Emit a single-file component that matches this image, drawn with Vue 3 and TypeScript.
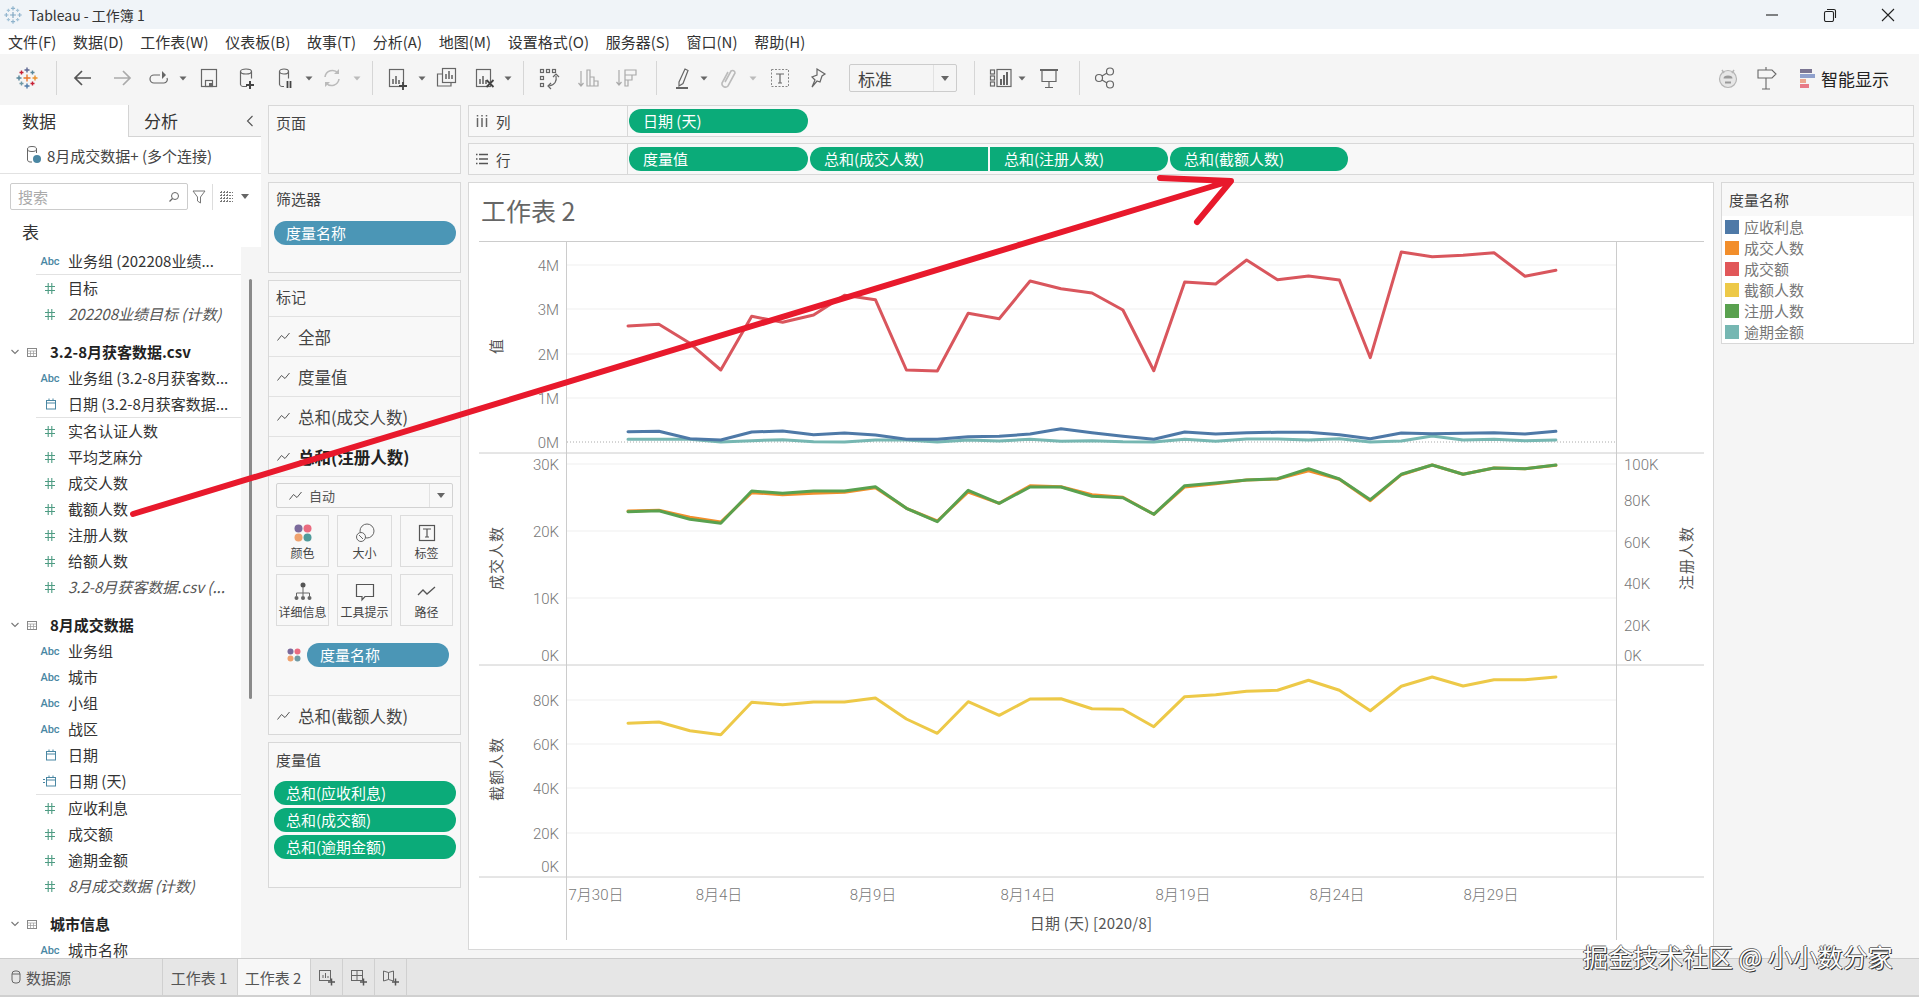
<script setup lang="ts">
type Tool = { c: number; s: number; icon: string; h?: number }

const B = 'fill="none" stroke="#666" stroke-width="1.2"'
const L = 'fill="none" stroke="#aaa" stroke-width="1.2"'
const bars = (x: number, y: number) =>
  `<path d="M${x} ${y + 9}v-5M${x + 3} ${y + 9}v-8M${x + 6} ${y + 9}v-4" fill="none" stroke="#555" stroke-width="1.4"/>`
const plus = (x: number, y: number, col: string) =>
  `<path d="M${x - 4} ${y}h8M${x} ${y - 4}v8" fill="none" stroke="${col}" stroke-width="1.8"/>`
const logo = [
  [12, 12, '#e8762d', 3.5], [12, 4, '#5b6591', 2.5], [12, 20, '#4e79a7', 2.5], [4, 12, '#59879b', 2.5], [20, 12, '#eb912b', 2.5],
  [6.5, 6.5, '#c72035', 2], [17.5, 6.5, '#59879b', 2], [6.5, 17.5, '#7099a6', 2], [17.5, 17.5, '#c72035', 2]
]
  .map(([x, y, c, r]) => `<path d="M${+x - +r} ${y}h${+r * 2}M${x} ${+y - +r}v${+r * 2}" fill="none" stroke="${c}" stroke-width="1.4"/>`)
  .join('')
const titleLogo = [
  [12, 12, '#7fa6c2', 3.5], [12, 4, '#8fb3cc', 2.5], [12, 20, '#8fb3cc', 2.5], [4, 12, '#8fb3cc', 2.5], [20, 12, '#8fb3cc', 2.5],
  [6.5, 6.5, '#a5c4d8', 2], [17.5, 6.5, '#a5c4d8', 2], [6.5, 17.5, '#a5c4d8', 2], [17.5, 17.5, '#a5c4d8', 2]
]
  .map(([x, y, c, r]) => `<path d="M${+x - +r} ${y}h${+r * 2}M${x} ${+y - +r}v${+r * 2}" fill="none" stroke="${c}" stroke-width="1.4"/>`)
  .join('')

const icons: Record<string, string> = {
  logo,
  titleLogo,
  back: '<path d="M20 12H5M11 5l-7 7 7 7" fill="none" stroke="#555" stroke-width="1.7"/>',
  forward: '<path d="M4 12h15M13 5l7 7-7 7" fill="none" stroke="#aaa" stroke-width="1.7"/>',
  redo: `<path d="M13 9H7a3.5 3.5 0 0 0 0 8h10a3.5 3.5 0 0 0 3-5" ${B}/><path d="M15 5l4 4-4 4z" fill="#666"/>`,
  caret: '<path d="M8.5 10.5h7L12 14.500z" fill="#666"/>',
  caretl: '<path d="M8.5 10.5h7L12 14.500z" fill="#bbb"/>',
  save: `<rect x="4.500" y="3.500" width="15" height="17" ${B}/><rect x="8.500" y="14.500" width="7" height="6" ${B}/><path d="M15 17h-3v3.500h3z" fill="#666"/>`,
  newds: `<path d="M5.500 5.500v13a2.500 2.500 0 0 0 2.500 2h4M16.500 5.500v7" ${B}/><ellipse cx="11" cy="5.500" rx="5.500" ry="2.500" ${B}/><path d="M11 19h8M15 15v8" fill="none" stroke="#444" stroke-width="2"/>`,
  pauseds: `<path d="M6.500 5.500v13a2.500 2.500 0 0 0 2.500 2h2M15.500 5.500v7" ${B}/><ellipse cx="11" cy="5.500" rx="4.500" ry="2.500" ${B}/><path d="M14.500 15v7M17.500 15v7" fill="none" stroke="#444" stroke-width="1.8"/>`,
  refresh: `<path d="M5 11a7.500 7.500 0 0 1 13-4M19 13a7.500 7.500 0 0 1-13 4" fill="none" stroke="#bbb" stroke-width="1.6"/><path d="M19 3v5h-5zM5 21v-5h5z" fill="#bbb"/>`,
  newsheet: `<rect x="4.500" y="3.500" width="14" height="17" ${B}/>${bars(8, 9)}${plus(18, 20, '#444')}`,
  dup: `<rect x="8.500" y="2.500" width="13" height="14" ${B}/><path d="M8 8H3.500v12H17v-3" ${B}/>${bars(12, 4)}`,
  clear: `<rect x="4.500" y="3.500" width="14" height="17" ${B}/>${bars(8, 9)}<path d="M14.500 17l7 7M21.500 17l-7 7" fill="none" stroke="#444" stroke-width="1.8" transform="translate(0 -3)"/>`,
  swap: `<rect x="3.500" y="3.500" width="3" height="3" ${B}/><rect x="9.500" y="3.500" width="3" height="3" ${B}/><rect x="15.500" y="3.500" width="3" height="3" ${B}/><rect x="3.500" y="10.500" width="3" height="3" ${B}/><rect x="3.500" y="17.500" width="3" height="3" ${B}/><path d="M19 10c1 5-1 9-7 10" ${B}/><path d="M16 11l3-3 3 3M14 17l-3 3 3 3" ${B}/>`,
  sortup: `<path d="M4 5v15M1.500 17L4 20l2.500-3M10 4h3v16h-3zM13 11h4v9h-4zM17 15h4v5h-4z" ${L}/>`,
  sortdn: `<path d="M4 4v15M1.500 16L4 19l2.500-3M10 4h11v5H10zM10 9h7v5h-7zM10 14h3v6h-3z" ${L}/>`,
  pen: '<path d="M8 16l6-13 3 1.500-5 13-4 2.500z" fill="none" stroke="#666" stroke-width="1.2"/><path d="M5 22h12" stroke="#555" stroke-width="1.800"/>',
  clip: '<path d="M9 16l6-11a2.500 2.500 0 0 1 4 2l-7 13a3.500 3.500 0 0 1-6-3l6-11" fill="none" stroke="#bbb" stroke-width="1.600" transform="translate(-1 0)"/>',
  tbox: `<rect x="3.500" y="3.500" width="17" height="17" fill="none" stroke="#888" stroke-dasharray="2 1.500"/><path d="M8 8h8M12 8v9M10 17h4" ${B}/>`,
  pin: `<path d="M12 3l8 5-3 2-2 6-3-1-5 6 3-7-3-3 5-2z" ${B}/>`,
  showme: `<rect x="1.500" y="4" width="4" height="4" ${B}/><rect x="1.500" y="10" width="4" height="4" ${B}/><rect x="1.500" y="16" width="4" height="4" ${B}/><rect x="8" y="3.500" width="14" height="17" ${B}/><path d="M12 19v-6M15 19v-10M18 19v-13" fill="none" stroke="#555" stroke-width="1.800"/>`,
  present: `<path d="M3 4h18" stroke="#555" stroke-width="1.800"/><path d="M5 4.500v11h14v-11M12 15.500v6M8 21.500h8" ${B}/>`,
  share: `<circle cx="6" cy="12" r="3.500" ${B}/><circle cx="17" cy="5.500" r="3.500" ${B}/><circle cx="17" cy="18.500" r="3.500" ${B}/><path d="M9 10l5-3M9 14l5 3" ${B}/>`
}

const tools: Tool[] = [
  { c: 27, s: 24, icon: 'logo' }, { c: 56, s: 1, icon: 'sep' }, { c: 83, s: 24, icon: 'back' }, { c: 122, s: 24, icon: 'forward' },
  { c: 159, s: 24, icon: 'redo' }, { c: 183, s: 12, icon: 'caret' }, { c: 209, s: 24, icon: 'save' }, { c: 247, s: 24, icon: 'newds' },
  { c: 285, s: 24, icon: 'pauseds' }, { c: 309, s: 12, icon: 'caret' }, { c: 332, s: 24, icon: 'refresh' }, { c: 357, s: 12, icon: 'caretl' },
  { c: 372, s: 1, icon: 'sep' }, { c: 397, s: 24, icon: 'newsheet' }, { c: 422, s: 12, icon: 'caret' }, { c: 446, s: 24, icon: 'dup' },
  { c: 484, s: 24, icon: 'clear' }, { c: 508, s: 12, icon: 'caret' }, { c: 523, s: 1, icon: 'sep' }, { c: 549, s: 24, icon: 'swap' },
  { c: 589, s: 24, icon: 'sortup' }, { c: 627, s: 24, icon: 'sortdn' }, { c: 656, s: 1, icon: 'sep' }, { c: 683, s: 24, icon: 'pen' },
  { c: 704, s: 12, icon: 'caret' }, { c: 729, s: 24, icon: 'clip' }, { c: 753, s: 12, icon: 'caretl' }, { c: 780, s: 24, icon: 'tbox' },
  { c: 817, s: 24, icon: 'pin' }, { c: 903, s: 108, icon: 'select' }, { c: 974, s: 1, icon: 'sep' }, { c: 1001, s: 24, icon: 'showme' },
  { c: 1022, s: 12, icon: 'caret' }, { c: 1049, s: 24, icon: 'present' }, { c: 1079, s: 1, icon: 'sep' }, { c: 1105, s: 24, icon: 'share' }
]
const toolGap = (i: number) => {
  const t = tools[i]
  const prev = i ? tools[i - 1].c + tools[i - 1].s / 2 : 0
  return t.c - t.s / 2 - prev + 'px'
}

const menus = ['文件(F)', '数据(D)', '工作表(W)', '仪表板(B)', '故事(T)', '分析(A)', '地图(M)', '设置格式(O)', '服务器(S)', '窗口(N)', '帮助(H)']

type Row = { t: string; k: string; sep?: boolean; it?: boolean }
const rows: Row[] = [
  { t: '业务组 (202208业绩...', k: 'abc', sep: true }, { t: '目标', k: 'num' }, { t: '202208业绩目标 (计数)', k: 'num', it: true },
  { t: '3.2-8月获客数据.csv', k: 'group' },
  { t: '业务组 (3.2-8月获客数...', k: 'abc' }, { t: '日期 (3.2-8月获客数据...', k: 'date', sep: true },
  { t: '实名认证人数', k: 'num' }, { t: '平均芝麻分', k: 'num' }, { t: '成交人数', k: 'num' }, { t: '截额人数', k: 'num' },
  { t: '注册人数', k: 'num' }, { t: '给额人数', k: 'num' }, { t: '3.2-8月获客数据.csv (...', k: 'num', it: true },
  { t: '8月成交数据', k: 'group' },
  { t: '业务组', k: 'abc' }, { t: '城市', k: 'abc' }, { t: '小组', k: 'abc' }, { t: '战区', k: 'abc' }, { t: '日期', k: 'date' },
  { t: '日期 (天)', k: 'datex', sep: true },
  { t: '应收利息', k: 'num' }, { t: '成交额', k: 'num' }, { t: '逾期金额', k: 'num' }, { t: '8月成交数据 (计数)', k: 'num', it: true },
  { t: '城市信息', k: 'group' }, { t: '城市名称', k: 'abc' }
]

const markRows = ['全部', '度量值', '总和(成交人数)']
const legend = [
  { t: '应收利息', c: '#4e79a7' }, { t: '成交人数', c: '#f28e2b' }, { t: '成交额', c: '#e15759' },
  { t: '截额人数', c: '#edc948' }, { t: '注册人数', c: '#59a14f' }, { t: '逾期金额', c: '#76b7b2' }
]

const px = (i: number) => 628 + i * 30.93
const line = (vals: number[], base: number) => vals.map((v, i) => `${px(i).toFixed(1)},${(base + v / 3).toFixed(1)}`).join(' ')
const series = [
  { c: '#76b7b2', base: 230, v: [628, 628, 628, 636, 632, 629, 635, 636, 630, 630, 636, 630, 633, 628, 634, 632, 635, 636, 628, 634, 627, 627, 630, 626, 636, 633, 618, 630, 628, 632, 630] },
  { c: '#4e79a7', base: 230, v: [605, 604, 626, 630, 606, 603, 614, 609, 615, 628, 628, 620, 619, 612, 596, 608, 619, 628, 606, 612, 608, 607, 607, 614, 626, 609, 611, 610, 608, 612, 604] },
  { c: '#d9565d', base: 230, v: [288, 283, 340, 420, 259, 277, 255, 196, 209, 420, 423, 250, 266, 153, 176, 189, 240, 422, 156, 162, 90, 149, 138, 150, 383, 66, 80, 76, 68, 139, 121] },
  { c: '#f28e2b', base: 230, v: [843, 841, 862, 876, 788, 794, 790, 787, 773, 835, 873, 786, 820, 767, 770, 794, 802, 853, 771, 761, 750, 747, 722, 748, 812, 734, 705, 733, 714, 716, 706] },
  { c: '#59a14f', base: 230, v: [845, 842, 868, 880, 783, 790, 783, 783, 770, 835, 875, 781, 820, 771, 771, 799, 803, 853, 767, 759, 750, 746, 716, 747, 809, 733, 705, 733, 714, 716, 705] },
  { c: '#edc948', base: 610, v: [340, 336, 362, 374, 277, 284, 276, 276, 264, 327, 370, 275, 316, 267, 266, 296, 298, 350, 260, 254, 244, 241, 211, 241, 302, 229, 201, 228, 209, 209, 201] }
]
const grid = [265, 309, 354, 398, 464, 531, 598, 700, 744, 788, 833]
const leftTicks = [
  { t: '4M', y: 265 }, { t: '3M', y: 309 }, { t: '2M', y: 354 }, { t: '1M', y: 398 }, { t: '0M', y: 442 },
  { t: '30K', y: 464 }, { t: '20K', y: 531 }, { t: '10K', y: 598 }, { t: '0K', y: 655 },
  { t: '80K', y: 700 }, { t: '60K', y: 744 }, { t: '40K', y: 788 }, { t: '20K', y: 833 }, { t: '0K', y: 866 }
]
const rightTicks = [
  { t: '100K', y: 464 }, { t: '80K', y: 500 }, { t: '60K', y: 542 }, { t: '40K', y: 583 }, { t: '20K', y: 625 }, { t: '0K', y: 655 }
]
const xTicks = [
  { t: '7月30日', x: 596 }, { t: '8月4日', x: 719 }, { t: '8月9日', x: 873 }, { t: '8月14日', x: 1028 },
  { t: '8月19日', x: 1183 }, { t: '8月24日', x: 1337 }, { t: '8月29日', x: 1491 }
]
const axisTitles = [
  { t: '值', x: 497, y: 346 }, { t: '成交人数', x: 497, y: 558 }, { t: '截额人数', x: 497, y: 769 }, { t: '注册人数', x: 1687, y: 558 }
]
</script>

<template>
  <div class="app">
    <header class="titlebar">
      <svg class="tlogo" width="20" height="20" viewBox="0 0 24 24" v-html="icons.titleLogo"></svg>
      <span class="ttext">Tableau - 工作簿 1</span>
      <div class="winbtns">
        <svg width="14" height="14" viewBox="0 0 14 14"><path d="M1 7h12" stroke="#222" stroke-width="1.1" /></svg>
        <svg width="14" height="14" viewBox="0 0 14 14"><rect x="1.500" y="3.500" width="9" height="10" rx="1.500" fill="none" stroke="#222" stroke-width="1.1" /><path d="M4 1.500h7a1.500 1.500 0 0 1 1.500 1.500v7" fill="none" stroke="#222" stroke-width="1.1" /></svg>
        <svg width="14" height="14" viewBox="0 0 14 14"><path d="M1 1l12 12M13 1L1 13" stroke="#222" stroke-width="1.1" /></svg>
      </div>
    </header>

    <nav class="menubar">
      <span v-for="m in menus" :key="m">{{ m }}</span>
    </nav>

    <div class="toolbar">
      <template v-for="(t, i) in tools" :key="i">
        <div v-if="t.icon === 'sep'" class="tsep" :style="{ marginLeft: toolGap(i) }"></div>
        <div v-else-if="t.icon === 'select'" class="tselect" :style="{ marginLeft: toolGap(i) }">
          <span class="tselect-text">标准</span>
          <span class="tselect-caret"><i class="tri"></i></span>
        </div>
        <svg v-else :width="t.s" height="24" :viewBox="t.s === 12 ? '6 0 12 24' : '0 0 24 24'" class="ticon" :style="{ marginLeft: toolGap(i) }" v-html="icons[t.icon]"></svg>
      </template>
      <div class="tright">
        <svg width="24" height="26" viewBox="0 0 24 26">
          <circle cx="12" cy="14" r="8.500" fill="#e6e6e6" stroke="#b5b5b5" stroke-width="1.200" />
          <path d="M6 5l2 3M18 5l-2 3" stroke="#b5b5b5" stroke-width="1.500" />
          <path d="M7.500 13.500a4.500 3 0 0 1 9 0zM9 16.500h6v2H9z" fill="#999" />
        </svg>
        <svg class="sign" width="24" height="26" viewBox="0 0 24 26">
          <path d="M4 5h14l4 4-4 4H4z" fill="none" stroke="#666" stroke-width="1.100" />
          <path d="M12 13v11M8 24h8M12 2v3" stroke="#666" stroke-width="1.100" />
        </svg>
        <div class="smbars"><i class="b1"></i><i class="b2"></i><i class="b3"></i><i class="b4"></i></div>
        <span class="smtext">智能显示</span>
      </div>
    </div>

    <div class="body">
      <aside class="sidebar">
        <div class="tabs">
          <div class="tab on">数据</div>
          <div class="tab off">分析
            <svg class="collapse" width="8" height="12" viewBox="0 0 8 12"><path d="M6.500 1L1.500 6l5 5" fill="none" stroke="#555" stroke-width="1.100" /></svg>
          </div>
        </div>
        <div class="dsrow">
          <svg width="16" height="20" viewBox="0 0 16 20">
            <path d="M1.500 4v11a2.500 2.500 0 0 0 2.500 2h2M10.500 4v4" fill="none" stroke="#666" />
            <ellipse cx="6" cy="4" rx="4.500" ry="2.500" fill="none" stroke="#666" />
            <circle cx="11" cy="14" r="4" fill="#4a87a3" />
          </svg>
          <span>8月成交数据+ (多个连接)</span>
        </div>
        <div class="searchrow">
          <div class="search">
            <span>搜索</span>
            <svg width="12" height="12" viewBox="0 0 12 12"><circle cx="7" cy="5" r="3.500" fill="none" stroke="#666" /><path d="M4.500 7.500L1.500 10.500" stroke="#666" stroke-width="1.200" /></svg>
          </div>
          <svg class="funnel" width="14" height="16" viewBox="0 0 14 16"><path d="M1 2h12L8.500 8v6l-3-2V8z" fill="none" stroke="#777" /></svg>
          <i class="vline"></i>
          <svg width="13" height="12" viewBox="0 0 13 12"><path d="M0 1.500h13M0 4.500h13M0 7.500h13M0 10.500h13M1.500 0v12M4.500 0v12M7.500 0v12" stroke="#777" stroke-dasharray="2 1" /></svg>
          <i class="tri dark"></i>
        </div>
        <div class="tbl-head">表</div>
        <div class="listwrap">
          <div class="list">
            <div v-for="(r, i) in rows" :key="i" class="row" :class="{ group: r.k === 'group', sep: r.sep, it: r.it }">
              <template v-if="r.k === 'group'">
                <svg class="chev" width="8" height="6" viewBox="0 0 8 6"><path d="M.5 1L4 4.500 7.500 1" fill="none" stroke="#777" stroke-width="1.100" /></svg>
                <svg class="gt" width="10" height="9" viewBox="0 0 10 9"><rect x=".5" y=".5" width="9" height="8" fill="none" stroke="#888" /><path d="M.5 3h9M.5 5.500h9M3.500 3v5.500M6.500 3v5.500" stroke="#999" stroke-width=".7" /></svg>
              </template>
              <span v-else class="ic">
                <span v-if="r.k === 'abc'" class="abc">Abc</span>
                <svg v-else-if="r.k === 'num'" width="10" height="11" viewBox="0 0 10 11"><path d="M0 3.500h10M0 7.500h10M3.200 0v11M6.800 0v11" stroke="#4e9c83" stroke-width="1.100" /></svg>
                <svg v-else width="14" height="12" viewBox="0 0 14 12">
                  <path v-if="r.k === 'datex'" d="M0 4.500h2M0 7.500h2" stroke="#4a87a3" />
                  <rect x="3.500" y="2.500" width="9" height="8.500" fill="none" stroke="#4a87a3" />
                  <path d="M3.500 5h9M6 .5v2M10 .5v2" stroke="#4a87a3" />
                </svg>
              </span>
              <span class="name">{{ r.t }}</span>
            </div>
          </div>
          <div class="gutter"><i class="thumb"></i></div>
        </div>
      </aside>

      <div class="panes">
        <section class="card pages"><div class="cardtitle">页面</div></section>
        <section class="card filters">
          <div class="cardtitle">筛选器</div>
          <div class="pill blue wide">度量名称</div>
        </section>
        <section class="card marks">
          <div class="markshead">标记</div>
          <div v-for="m in markRows" :key="m" class="markrow">
            <svg width="13" height="10" viewBox="0 0 13 10"><path d="M.5 8.500l4-5 3.500 3 4.500-5.500" fill="none" stroke="#555" /></svg>
            <span>{{ m }}</span>
          </div>
          <div class="markrow strong">
            <svg width="13" height="10" viewBox="0 0 13 10"><path d="M.5 8.500l4-5 3.500 3 4.500-5.500" fill="none" stroke="#555" /></svg>
            <span>总和(注册人数)</span>
          </div>
          <div class="markdetail">
            <div class="markselect">
              <svg width="13" height="10" viewBox="0 0 13 10"><path d="M.5 8.500l4-5 3.500 3 4.500-5.500" fill="none" stroke="#555" /></svg>
              <span>自动</span>
              <i class="selsplit"><i class="tri"></i></i>
            </div>
            <div class="markbtns">
              <div class="mbtn">
                <svg width="20" height="20" viewBox="0 0 20 20"><circle cx="5.500" cy="5.500" r="4" fill="#7b6a9b" /><circle cx="14.500" cy="5.500" r="4" fill="#ea6b80" /><circle cx="5.500" cy="14.500" r="4" fill="#efa26e" /><circle cx="14.500" cy="14.500" r="4" fill="#4f9b9b" /></svg>
                <span>颜色</span>
              </div>
              <div class="mbtn">
                <svg width="20" height="20" viewBox="0 0 20 20"><circle cx="12" cy="8" r="7" fill="none" stroke="#666" /><circle cx="6" cy="14" r="4.500" fill="#f8f8f8" stroke="#666" /><path d="M4 12l4 4" stroke="#666" /></svg>
                <span>大小</span>
              </div>
              <div class="mbtn">
                <svg width="20" height="20" viewBox="0 0 20 20"><rect x="2.500" y="2.500" width="15" height="15" fill="none" stroke="#555" stroke-width="1.200" /><path d="M6 6h8M10 6v8M8 14h4" fill="none" stroke="#555" stroke-width="1.200" /></svg>
                <span>标签</span>
              </div>
              <div class="mbtn">
                <svg width="20" height="20" viewBox="0 0 20 20"><circle cx="10" cy="3" r="2.500" fill="#555" /><path d="M10 5v6M3.500 14v-3h13v3M10 11v3" fill="none" stroke="#666" /><circle cx="3.500" cy="16" r="2" fill="#666" /><circle cx="10" cy="16" r="2" fill="#666" /><circle cx="16.500" cy="16" r="2" fill="#666" /></svg>
                <span>详细信息</span>
              </div>
              <div class="mbtn">
                <svg width="20" height="20" viewBox="0 0 20 20"><path d="M1.500 2.500h17v12H10l-3 3.500v-3.500H1.500z" fill="none" stroke="#555" stroke-width="1.200" /></svg>
                <span>工具提示</span>
              </div>
              <div class="mbtn">
                <svg width="20" height="20" viewBox="0 0 20 20"><path d="M1 13l5-5 4 4 8-7" fill="none" stroke="#555" stroke-width="1.300" /></svg>
                <span>路径</span>
              </div>
            </div>
            <div class="colorrow">
              <svg width="14" height="14" viewBox="0 0 14 14"><circle cx="3.500" cy="3.500" r="3" fill="#7b6a9b" /><circle cx="10.500" cy="3.500" r="3" fill="#ea6b80" /><circle cx="3.500" cy="10.500" r="3" fill="#efa26e" /><circle cx="10.500" cy="10.500" r="3" fill="#6f9ba5" /></svg>
              <div class="pill blue cpill">度量名称</div>
            </div>
          </div>
          <div class="markrow">
            <svg width="13" height="10" viewBox="0 0 13 10"><path d="M.5 8.500l4-5 3.500 3 4.500-5.500" fill="none" stroke="#555" /></svg>
            <span>总和(截额人数)</span>
          </div>
        </section>
        <section class="card measures">
          <div class="cardtitle">度量值</div>
          <div class="mpills">
            <div class="pill green wide">总和(应收利息)</div>
            <div class="pill green wide">总和(成交额)</div>
            <div class="pill green wide">总和(逾期金额)</div>
          </div>
        </section>
      </div>

      <main class="main">
        <div class="shelf">
          <div class="shelflabel">
            <svg width="12" height="14" viewBox="0 0 12 14"><path d="M1.500 4v9M6 4v9M10.500 4v9M1.500 1v1.500M6 1v1.500M10.500 1v1.500" stroke="#666" stroke-width="1.500" /></svg>
            <span>列</span>
          </div>
          <div class="shelfpills"><div class="pill green sp">日期 (天)</div></div>
        </div>
        <div class="shelf second">
          <div class="shelflabel">
            <svg width="12" height="14" viewBox="0 0 12 14"><path d="M0 2.500h1.500M3 2.500h9M0 7h1.500M3 7h9M0 11.500h1.500M3 11.500h9" stroke="#555" stroke-width="1.300" /></svg>
            <span>行</span>
          </div>
          <div class="shelfpills">
            <div class="pill green sp">度量值</div>
            <div class="pill green sp rsq gap">总和(成交人数)</div>
            <div class="pill green sp lsq gap">总和(注册人数)</div>
            <div class="pill green sp gap">总和(截额人数)</div>
          </div>
        </div>
        <div class="viz">
          <section class="chart">
            <div class="charttitle">工作表 2</div>
            <svg class="plot" width="1246" height="709" viewBox="468 241 1246 709">
              <line v-for="y in grid" :key="y" x1="567" x2="1616" :y1="y" :y2="y" class="gridline" />
              <line x1="567" x2="1616" y1="442" y2="442" class="zero" />
              <line x1="479" x2="1704" y1="241.500" y2="241.500" class="axis" />
              <line x1="479" x2="1704" y1="453" y2="453" class="axis" />
              <line x1="479" x2="1704" y1="665" y2="665" class="axis" />
              <line x1="479" x2="1704" y1="877" y2="877" class="axis" />
              <line x1="566.500" x2="566.500" y1="241" y2="940" class="axis" />
              <line x1="1616.500" x2="1616.500" y1="241" y2="940" class="axis" />
              <polyline v-for="s in series" :key="s.c" :points="line(s.v, s.base)" :stroke="s.c" class="series" />
              <text v-for="t in leftTicks" :key="t.t + t.y" x="559" :y="t.y + 6" class="tick end">{{ t.t }}</text>
              <text v-for="t in rightTicks" :key="t.t" x="1624" :y="t.y + 6" class="tick">{{ t.t }}</text>
              <text v-for="t in xTicks" :key="t.t" :x="t.x" y="900" class="tick mid">{{ t.t }}</text>
              <text x="1091" y="929" class="atitle mid wider">日期 (天) [2020/8]</text>
              <text v-for="a in axisTitles" :key="a.t" class="atitle mid spaced" :transform="`translate(${a.x + 5} ${a.y}) rotate(-90)`">{{ a.t }}</text>
            </svg>
          </section>
          <section class="legend">
            <div class="lhead">度量名称</div>
            <div class="litems">
              <div v-for="l in legend" :key="l.t" class="litem">
                <i class="swatch" :style="{ background: l.c }"></i>
                <span>{{ l.t }}</span>
              </div>
            </div>
          </section>
        </div>
      </main>
    </div>

    <footer class="tabbar">
      <div class="bt ds">
        <svg width="10" height="14" viewBox="0 0 10 14"><rect x="1" y="1" width="8" height="12" rx="3" fill="none" stroke="#666" /><path d="M1 4h8" stroke="#666" /></svg>
        <span>数据源</span>
      </div>
      <div class="bt sheet">工作表 1</div>
      <div class="bt sheet active">工作表 2</div>
      <div class="bt add">
        <svg width="18" height="18" viewBox="0 0 18 18"><rect x="1.500" y="2.500" width="11" height="10" fill="none" stroke="#666" /><path d="M5 10V7M7.500 10V5M10 10V8" stroke="#666" /><path d="M10 14h7M13.500 10.500v7" stroke="#555" stroke-width="1.500" /></svg>
      </div>
      <div class="bt add">
        <svg width="18" height="18" viewBox="0 0 18 18"><rect x="1.500" y="2.500" width="11" height="10" fill="none" stroke="#666" /><path d="M7 2.500v10M1.500 7.500h11" stroke="#666" /><path d="M10 14h7M13.500 10.500v7" stroke="#555" stroke-width="1.500" /></svg>
      </div>
      <div class="bt add">
        <svg width="18" height="18" viewBox="0 0 18 18"><path d="M1.500 3l5 1.500L11.500 3v10l-5-1.500L1.500 13z" fill="none" stroke="#666" /><path d="M6.500 4.500v7" stroke="#666" /><path d="M10 14h7M13.500 10.500v7" stroke="#555" stroke-width="1.500" /></svg>
      </div>
    </footer>

    <svg class="arrow" width="1919" height="997" viewBox="0 0 1919 997">
      <path d="M133 514L1230 181M1160 178L1231 181L1197 222" fill="none" stroke="#e8192c" stroke-width="6" stroke-linecap="round" stroke-linejoin="round" />
    </svg>
    <div class="watermark">掘金技术社区 @ 小小数分家</div>
  </div>
</template>

<style scoped>
.app {
  position: relative;
  width: 1919px;
  height: 997px;
  overflow: hidden;
  display: flex;
  flex-direction: column;
  background: #fff;
  color: #333;
  font-family: "Noto Sans CJK SC", "Noto Sans", sans-serif;
  font-size: 15px;
}
i { display: block; font-style: normal; }

.titlebar {
  height: 29px;
  flex: none;
  display: flex;
  align-items: center;
  background: #f0f4f8;
  padding-left: 3px;
}
.ttext { margin-left: 6px; font-size: 14px; color: #333; }
.winbtns { margin-left: auto; display: flex; gap: 44px; padding-right: 24px; }
.menubar {
  height: 25px;
  flex: none;
  display: flex;
  align-items: center;
  gap: 16.700px;
  padding-left: 8px;
  background: #fff;
  color: #333;
  font-size: 15px;
}
.toolbar {
  height: 51px;
  flex: none;
  box-sizing: border-box;
  display: flex;
  align-items: center;
  padding-bottom: 3px;
  background: #f5f5f5;
}
.ticon { flex: none; }
.tsep { width: 1px; height: 34px; background: #d6d6d6; flex: none; }
.tselect {
  width: 108px;
  height: 28px;
  flex: none;
  box-sizing: border-box;
  display: flex;
  align-items: center;
  border: 1px solid #ccc;
  border-radius: 2px;
  background: #f5f5f5;
}
.tselect-text { flex: 1; padding-left: 8px; font-size: 17px; color: #444; }
.tselect-caret {
  width: 22px;
  height: 100%;
  display: flex;
  align-items: center;
  justify-content: center;
  border-left: 1px solid #e2e2e2;
}
.tri { width: 0; height: 0; border: 4px solid transparent; border-top: 5px solid #666; border-bottom: 0; }
.tri.dark { margin-left: 8px; }
.tright { margin-left: auto; padding-right: 30px; display: flex; align-items: center; }
.sign { margin-left: 14px; }
.smbars { margin-left: 22px; width: 16px; display: flex; flex-direction: column; gap: 1px; }
.smbars i { height: 4px; }
.b1 { width: 12px; background: #7a7592; }
.b2 { width: 15px; background: #8fa0cc; }
.b3 { width: 6px; background: #eca78f; }
.b4 { width: 9px; background: #e87a87; }
.smtext { margin-left: 5px; font-size: 17px; color: #222; }

.body { height: 853px; flex: none; display: flex; background: #f5f5f5; }

.sidebar {
  width: 261px;
  flex: none;
  background: #fff;
  display: flex;
  flex-direction: column;
}
.tabs { height: 32px; flex: none; display: flex; }
.tab { box-sizing: border-box; font-size: 17px; line-height: 32px; color: #333; }
.tab.on { width: 128px; padding-left: 22px; }
.tab.off {
  flex: 1;
  padding-left: 15px;
  background: #f5f5f5;
  border-left: 1px solid #d4d4d4;
  border-bottom: 1px solid #d4d4d4;
  position: relative;
  display: flex;
  justify-content: space-between;
  align-items: center;
  padding-right: 7px;
}
.dsrow {
  height: 37px;
  flex: none;
  box-sizing: border-box;
  display: flex;
  align-items: center;
  gap: 5px;
  padding-left: 26px;
  border-bottom: 1px solid #e2e2e2;
  color: #444;
}
.searchrow { height: 45px; flex: none; box-sizing: border-box; display: flex; align-items: center; padding: 0 0 0 10px; }
.search {
  width: 178px;
  height: 27px;
  box-sizing: border-box;
  display: flex;
  align-items: center;
  justify-content: space-between;
  padding: 0 7px;
  border: 1px solid #ccc;
  border-radius: 2px;
  color: #aaa;
}
.funnel { margin-left: 4px; }
.vline { width: 1px; height: 26px; background: #ddd; margin: 0 7px 0 6px; }
.tbl-head { height: 28px; flex: none; padding-left: 22px; font-size: 17px; line-height: 26px; color: #333; }
.listwrap { flex: 1; min-height: 0; display: flex; }
.list { width: 241px; flex: none; padding-top: 1px; height: 711px; }
.row {
  height: 26px;
  display: flex;
  align-items: center;
  position: relative;
  white-space: nowrap;
  color: #333;
  line-height: 16px;
}
.row.sep { height: 27px; padding-bottom: 1px; box-sizing: border-box; }
.row.sep::after {
  content: "";
  position: absolute;
  left: 36px;
  right: 0;
  bottom: 0;
  height: 1px;
  background: #e2e2e2;
}
.row.it { font-style: italic; color: #555; }
.row.group { margin-top: 12px; font-weight: 700; color: #222; padding-left: 11px; }
.row.group .name { margin-left: 13px; }
.gt { margin-left: 8px; }
.ic {
  width: 20px;
  margin-left: 40px;
  margin-right: 8px;
  display: flex;
  justify-content: center;
  flex: none;
  font-style: normal;
}
.abc { font: 500 11px Roboto, sans-serif; color: #4a87a3; }
.gutter { flex: 1; background: #f5f5f5; position: relative; padding-left: 8px; }
.thumb { width: 3px; height: 420px; margin-top: 32px; background: #8a8a8a; border-radius: 2px; }

.panes {
  width: 193px;
  flex: none;
  margin-left: 7px;
  display: flex;
  flex-direction: column;
  gap: 7px;
}
.card { box-sizing: border-box; background: #f8f8f8; border: 1px solid #d8d8d8; }
.cardtitle { padding: 7px 0 0 7px; line-height: 22px; color: #444; }
.pages { height: 69px; }
.pages .cardtitle { padding-top: 6px; }
.filters { height: 91px; margin-top: 1px; }
.filters .cardtitle { padding-top: 5px; }
.pill {
  height: 24px;
  box-sizing: border-box;
  border-radius: 12px;
  color: #fff;
  line-height: 23px;
  padding-left: 12px;
  white-space: nowrap;
}
.pill.blue { background: #4b96b6; }
.pill.green { background: #0bab79; }
.pill.wide { width: 182px; margin-left: 5px; }
.filters .pill { margin-top: 11px; }
.marks { height: 455px; }
.markshead { height: 35px; padding-left: 7px; line-height: 32px; color: #444; }
.markrow {
  height: 40px;
  box-sizing: border-box;
  display: flex;
  align-items: center;
  gap: 8px;
  padding-left: 8px;
  border-top: 1px solid #e2e2e2;
  font-size: 16.500px;
  color: #444;
}
.markrow.strong { font-weight: 700; color: #222; }
.markdetail { height: 219px; box-sizing: border-box; border-top: 1px solid #e2e2e2; padding: 6px 7px 0; }
.markselect {
  height: 25px;
  box-sizing: border-box;
  display: flex;
  align-items: center;
  gap: 7px;
  padding-left: 12px;
  border: 1px solid #d2d2d2;
  border-radius: 2px;
  font-size: 13px;
  color: #555;
}
.selsplit {
  margin-left: auto;
  width: 22px;
  height: 100%;
  display: flex;
  align-items: center;
  justify-content: center;
  border-left: 1px solid #e2e2e2;
}
.markbtns {
  margin-top: 7px;
  display: grid;
  grid-template-columns: 53px 55px 53px;
  grid-auto-rows: 52px;
  gap: 7px 8px;
}
.mbtn {
  box-sizing: border-box;
  border: 1px solid #dcdcdc;
  display: flex;
  flex-direction: column;
  align-items: center;
  padding-top: 7px;
  font-size: 12px;
  line-height: 20px;
  color: #444;
  white-space: nowrap;
}
.colorrow { margin-top: 17px; display: flex; align-items: center; padding-left: 11px; gap: 6px; }
.cpill { width: 142px; padding-left: 13px; }
.measures { height: 146px; }
.measures .cardtitle { padding-top: 6px; }
.mpills { margin-top: 10px; display: flex; flex-direction: column; gap: 3px; }

.main { width: 1446px; flex: none; margin-left: 7px; display: flex; flex-direction: column; }
.shelf {
  height: 32px;
  flex: none;
  box-sizing: border-box;
  display: flex;
  background: #f8f8f8;
  border: 1px solid #d8d8d8;
}
.shelf.second { margin-top: 6px; }
.shelflabel {
  width: 159px;
  flex: none;
  box-sizing: border-box;
  display: flex;
  align-items: center;
  gap: 8px;
  padding-left: 7px;
  border-right: 1px solid #d8d8d8;
  font-size: 14.500px;
  color: #444;
}
.shelfpills { display: flex; align-items: center; padding-left: 1px; }
.sp { width: 179px; padding-left: 14px; }
.sp.gap { margin-left: 2px; width: 178px; }
.rsq { border-radius: 12px 0 0 12px; }
.lsq { border-radius: 0 12px 12px 0; }

.viz { margin-top: 7px; display: flex; gap: 7px; height: 768px; }
.chart { width: 1246px; box-sizing: border-box; height: 768px; background: #fff; border: 1px solid #d8d8d8; position: relative; overflow: hidden; }
.charttitle { height: 58px; box-sizing: border-box; padding: 9px 0 0 12px; font-size: 25px; line-height: 36px; color: #666; }
.plot { display: block; margin-left: -1px; }
.gridline { stroke: #efefef; stroke-width: 1; }
.zero { stroke: #aaa; stroke-width: 1; stroke-dasharray: 1 2; }
.axis { stroke: #ccc; stroke-width: 1; }
.series { fill: none; stroke-width: 3; stroke-linejoin: round; stroke-linecap: round; }
.tick { font: 300 15px Roboto, "Noto Sans CJK SC", sans-serif; fill: #777; }
.end { text-anchor: end; }
.mid { text-anchor: middle; }
.atitle { font: 15px "Noto Sans CJK SC", sans-serif; fill: #555; }
.wider { letter-spacing: .2px; }
.spaced { letter-spacing: 1px; }
.legend { width: 193px; height: 162px; box-sizing: border-box; background: #fff; border: 1px solid #d8d8d8; }
.lhead { height: 33px; padding-left: 7px; line-height: 33px; background: #f8f8f8; color: #444; }
.litems { padding: 0 0 0 3px; }
.litem { height: 21px; display: flex; align-items: center; gap: 5px; color: #777; line-height: 16px; }
.swatch { width: 14px; height: 14px; flex: none; }

.tabbar {
  height: 39px;
  flex: none;
  box-sizing: border-box;
  display: flex;
  background: #e6e6e6;
  border-top: 1px solid #ccc;
  border-bottom: 2px solid #d0d0d0;
}
.bt {
  box-sizing: border-box;
  display: flex;
  align-items: center;
  border-right: 1px solid #d0d0d0;
  color: #555;
  white-space: nowrap;
}
.ds { width: 163px; gap: 5px; padding-left: 11px; }
.sheet { width: 75px; justify-content: center; padding-right: 2px; }
.active { background: #f7f7f7; width: 73px; }
.add { width: 32px; justify-content: center; }

.arrow { position: absolute; left: 0; top: 0; pointer-events: none; }
.watermark {
  position: absolute;
  left: 1583px;
  top: 938px;
  font-size: 25px;
  line-height: 36px;
  white-space: nowrap;
  color: #fff;
  text-shadow: 1px 1px 0 #333, -1px 0 0 #555, 0 -1px 0 #777;
  pointer-events: none;
}
</style>
